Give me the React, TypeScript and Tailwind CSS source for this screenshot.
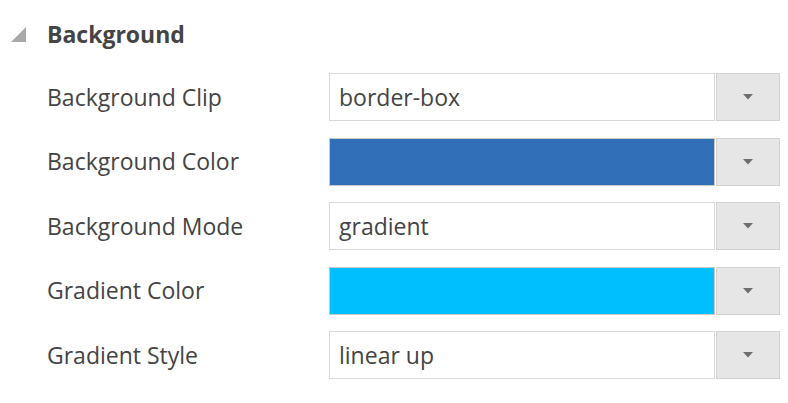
import React from "react";

const rows: { label: string; value?: string; color?: string }[] = [
  { label: "Background Clip", value: "border-box" },
  { label: "Background Color", color: "#316fb8" },
  { label: "Background Mode", value: "gradient" },
  { label: "Gradient Color", color: "#00bfff" },
  { label: "Gradient Style", value: "linear up" },
];

function Arrow() {
  return (
    <svg width="10" height="6" viewBox="0 0 10 6">
      <polygon points="0,0 10,0 5,5.5" fill="#6e6e6e" />
    </svg>
  );
}

export default function App() {
  return (
    <div
      className="w-[788px] h-[403px] bg-white text-[#444444] overflow-hidden"
      style={{ fontFamily: '"Open Sans", "Noto Sans", sans-serif' }}
    >
      <div className="flex items-center h-[68px] pl-[11px]">
        <svg width="15" height="15" viewBox="0 0 15 15" className="mt-[1px]">
          <polygon points="0,15 15,15 15,0" fill="#a9a9a9" />
        </svg>
        <span className="ml-[21px] text-[23px] font-bold leading-none">Background</span>
      </div>
      <div className="flex flex-col gap-[16.5px] mt-[5px]">
        {rows.map((r) => (
          <div key={r.label} className="flex items-center h-[48px]">
            <div className="w-[329px] pl-[47px] text-[23px] leading-none">{r.label}</div>
            <div
              className={
                "w-[386px] h-[48px] border flex items-center pl-[9px] text-[23px] leading-none " +
                (r.color ? "border-[#c8c8c8]" : "border-[#d9d9d9] bg-white")
              }
              style={r.color ? { backgroundColor: r.color } : undefined}
            >
              {r.value}
            </div>
            <div className="ml-[1px] w-[64px] h-[48px] bg-[#e6e6e6] border border-[#d2d2d2] flex items-center justify-center">
              <Arrow />
            </div>
          </div>
        ))}
      </div>
    </div>
  );
}
